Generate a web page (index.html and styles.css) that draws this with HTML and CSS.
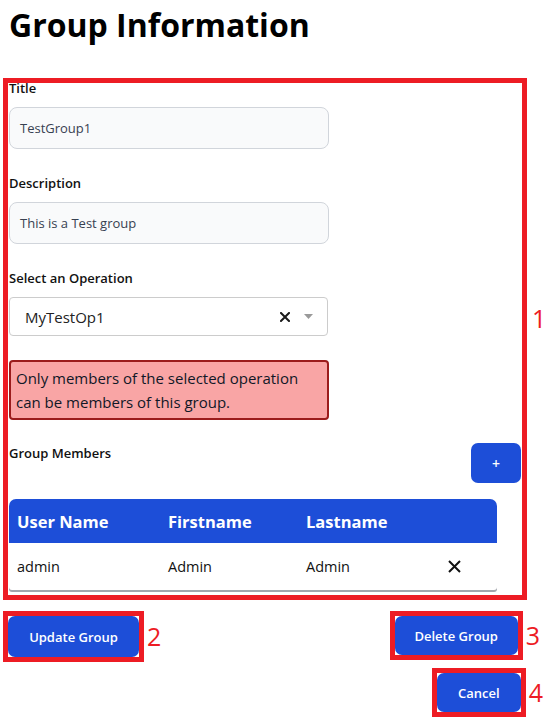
FILE: index.html
```html
<!DOCTYPE html>
<html lang="en">
<head>
<meta charset="utf-8">
<title>Group Information</title>
<link rel="stylesheet" href="styles.css">
</head>
<body>
<div class="page">
  <h1 class="page-title">Group Information</h1>

  <div class="mark mark-main">
    <span class="mark-num mark-num-main">1</span>
    <form class="form">
      <div class="field">
        <label class="field-label">Title</label>
        <div class="input">TestGroup1</div>
      </div>
      <div class="field">
        <label class="field-label">Description</label>
        <div class="input">This is a Test group</div>
      </div>
      <div class="field">
        <label class="field-label">Select an Operation</label>
        <div class="select">
          <span class="select-value">MyTestOp1</span>
          <span class="select-indicators">
            <svg class="select-clear" width="10" height="10" viewBox="0 0 10 10"><path d="M1 1L9 9M9 1L1 9" stroke="#1a1a1a" stroke-width="2" stroke-linecap="square"/></svg>
            <svg class="select-caret" width="9" height="5" viewBox="0 0 9 5"><path d="M0 0H9L4.5 5Z" fill="#9a9a9a"/></svg>
          </span>
        </div>
      </div>
      <div class="alert">Only members of the selected operation<br>can be members of this group.</div>
      <div class="members-head">
        <span class="field-label">Group Members</span>
        <button type="button" class="btn btn-add">+</button>
      </div>
      <div class="table">
        <div class="table-row table-head">
          <span>User Name</span><span>Firstname</span><span>Lastname</span><span></span>
        </div>
        <div class="table-row table-body">
          <span>admin</span><span>Admin</span><span>Admin</span>
          <span class="remove"><svg width="13" height="13" viewBox="0 0 13 13"><path d="M1 1L12 12M12 1L1 12" stroke="#111" stroke-width="2"/></svg></span>
        </div>
      </div>
    </form>
  </div>

  <div class="actions">
    <div class="mark-wrap">
      <div class="mark"><button type="button" class="btn btn-update">Update Group</button></div>
      <span class="mark-num">2</span>
    </div>
    <div class="mark-wrap">
      <div class="mark"><button type="button" class="btn btn-delete">Delete Group</button></div>
      <span class="mark-num">3</span>
    </div>
  </div>
  <div class="actions actions-end">
    <div class="mark-wrap">
      <div class="mark mark-cancel"><button type="button" class="btn btn-cancel">Cancel</button></div>
      <span class="mark-num">4</span>
    </div>
  </div>
</div>
</body>
</html>
```
FILE: styles.css
```css
* { box-sizing: border-box; }
html, body { margin: 0; padding: 0; background: #fff; }
body {
  font-family: "Open Sans", "Noto Sans", "DejaVu Sans", sans-serif;
  color: #000;
}
.page { padding: 0 7px 0 3px; width: 550px; }

.page-title {
  margin: 0 0 0 6px;
  padding-top: 3px;
  font-size: 32px;
  line-height: 44px;
  font-weight: 700;
  height: 78px;
}

.mark {
  border: 5px solid #ed1c24;
  position: relative;
}
.mark-main { width: 524px; height: 522px; }
.mark-num {
  color: #ed1c24;
  font-size: 25px;
  line-height: 25px;
}
.mark-num-main {
  position: absolute;
  left: 524px;
  top: 223px;
}

.form { margin: -5px 0 0 1px; }
.field { margin-bottom: 24px; }
.field-label {
  display: block;
  font-size: 13px;
  font-weight: 600;
  line-height: 20px;
  margin-bottom: 9px;
  color: #111;
}
.input {
  width: 320px;
  height: 42px;
  border: 1px solid #d1d5db;
  border-radius: 8px;
  background: #f9fafb;
  padding: 0 10px;
  display: flex;
  align-items: center;
  font-size: 13px;
  color: #374151;
}
.select {
  width: 319px;
  height: 39px;
  border: 1px solid #cccccc;
  border-radius: 4px;
  background: #fff;
  display: flex;
  align-items: center;
  justify-content: space-between;
  padding: 0 14px 0 15px;
}
.select-value { font-size: 15px; color: #222; }
.select-indicators { display: flex; align-items: center; gap: 14px; }
.select-clear { display: block; }
.select-caret { display: block; }

.alert {
  width: 320px;
  background: #f9a5a5;
  border: 2px solid #9b1c1c;
  border-radius: 4px;
  padding: 4px 4px 4px 5px;
  font-size: 15px;
  line-height: 24px;
  color: #111827;
  margin-bottom: 23px;
}

.members-head {
  display: flex;
  justify-content: space-between;
  align-items: flex-start;
  margin-bottom: 16px;
}
.members-head .field-label { margin: 0; }

.btn {
  border: none;
  background: #1d4ed8;
  color: #fff;
  font-family: inherit;
  font-weight: 600;
  font-size: 13px;
  border-radius: 7px;
  cursor: pointer;
  padding: 0;
  display: block;
}
.btn-add { width: 50px; height: 40px; font-size: 14px; margin-right: 1px; }

.table {
  width: 488px;
  border-radius: 7px 7px 3px 3px;
  box-shadow: 0 2px 0 #a2a5ac;
}
.table-row {
  display: grid;
  grid-template-columns: 151px 138px 142px 57px;
  align-items: center;
}
.table-row span { padding-left: 8px; }
.table-head {
  background: #1d4ed8;
  color: #fff;
  font-weight: 700;
  font-size: 16.5px;
  height: 44px;
  border-radius: 7px 7px 0 0;
}
.table-body {
  height: 47px;
  font-size: 14.5px;
  color: #111;
}
.remove svg { display: block; }

.actions {
  display: flex;
  justify-content: space-between;
  align-items: flex-start;
  margin-top: 11px;
  padding-right: 3px;
}
.actions-end { justify-content: flex-end; margin-top: 6px; padding-right: 0; }
.mark-wrap { display: flex; align-items: center; gap: 3px; }

.btn-update { width: 131px; height: 41px; }
.btn-delete { width: 123px; height: 39px; }
.btn-cancel { width: 84px; height: 39px; }
```
